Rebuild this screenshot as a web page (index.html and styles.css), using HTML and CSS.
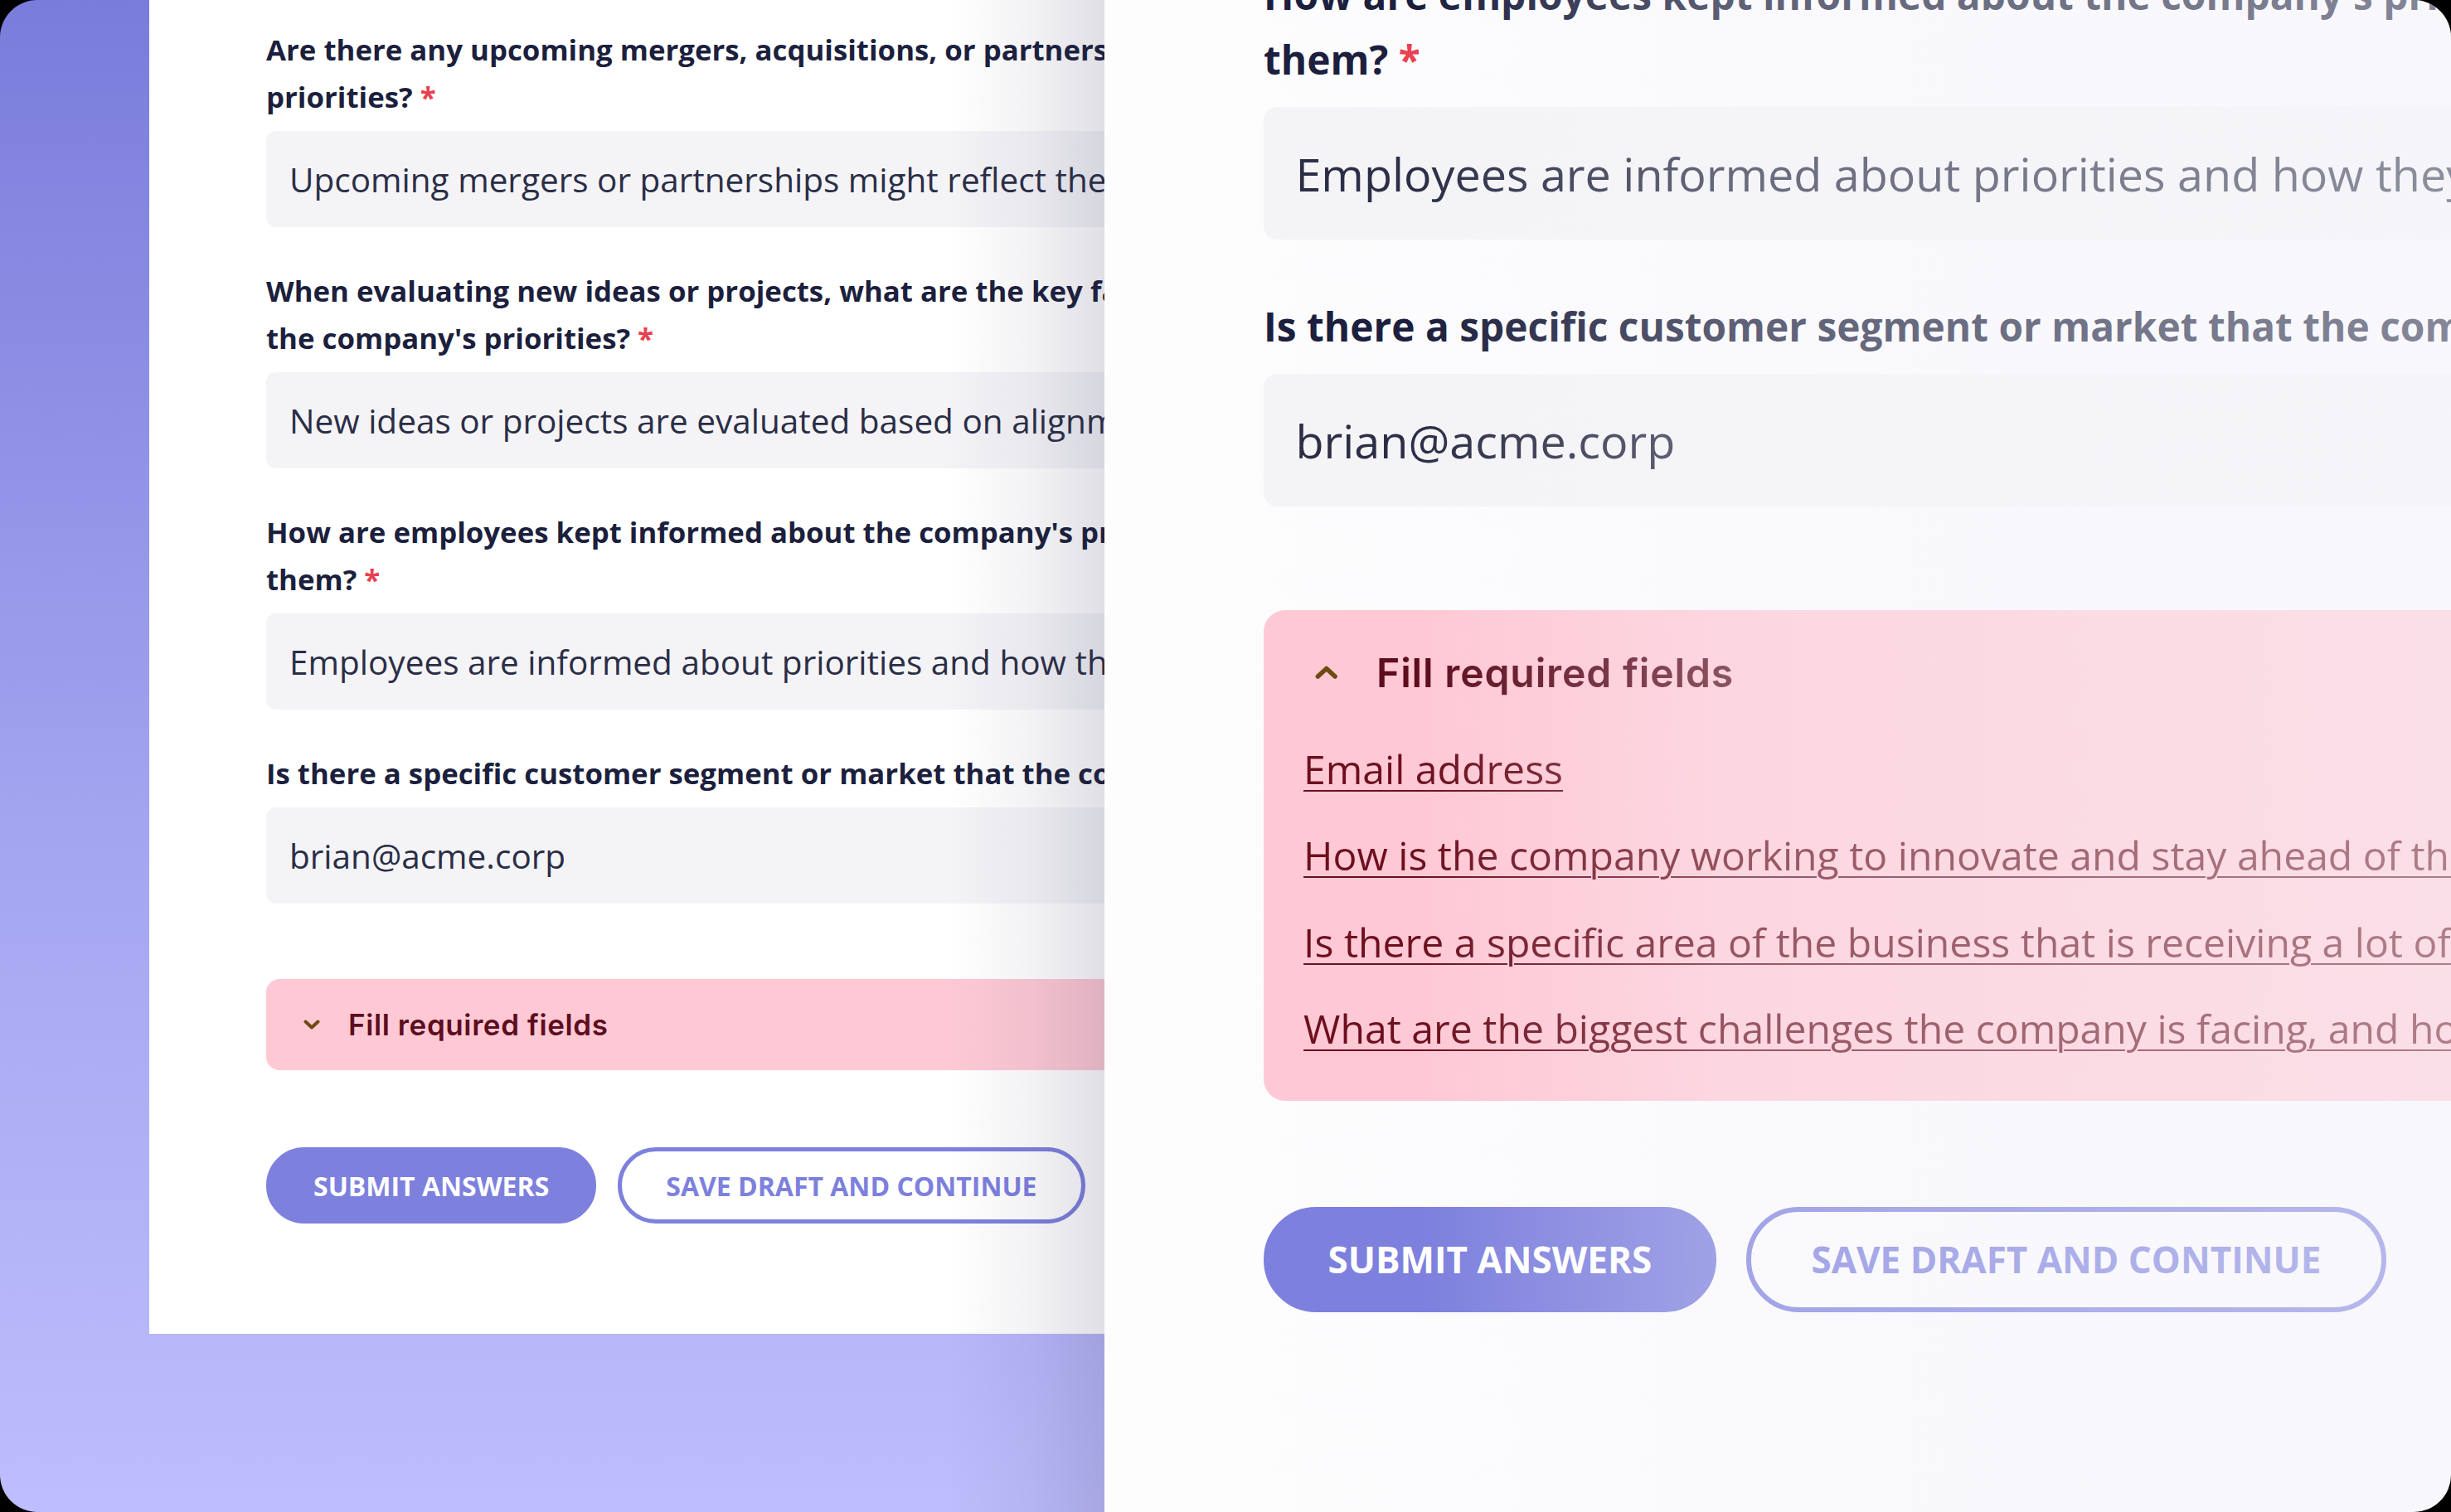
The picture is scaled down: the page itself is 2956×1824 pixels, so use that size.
FILE: index.html
```html
<!DOCTYPE html>
<html lang="en">
<head>
<meta charset="utf-8">
<title>Required fields</title>
<link rel="stylesheet" href="styles.css">
</head>
<body>
<div class="frame">
  <section class="left">
    <div class="card">
      <div class="form">
        <div class="group">
          <div class="label">Are there any upcoming mergers, acquisitions, or partnerships that could impact the company's<br>priorities? <span class="req">*</span></div>
          <div class="input">Upcoming mergers or partnerships might reflect the company's strategic priorities and growth plans.</div>
        </div>
        <div class="group">
          <div class="label">When evaluating new ideas or projects, what are the key factors used to determine their alignment with<br>the company's priorities? <span class="req">*</span></div>
          <div class="input">New ideas or projects are evaluated based on alignment with strategic goals, feasibility, and impact.</div>
        </div>
        <div class="group">
          <div class="label">How are employees kept informed about the company's priorities and how they can contribute to<br>them? <span class="req">*</span></div>
          <div class="input">Employees are informed about priorities and how they can contribute through regular meetings.</div>
        </div>
        <div class="group">
          <div class="label">Is there a specific customer segment or market that the company is focusing on?</div>
          <div class="input">brian@acme.corp</div>
        </div>
        <div class="errors">
          <div class="err-head">
            <svg class="chev" viewBox="0 0 20 12" width="20" height="12"><polyline points="2.5,2.5 10,9.5 17.5,2.5" fill="none" stroke="currentColor" stroke-width="4" stroke-linecap="round" stroke-linejoin="round"/></svg>
            <span class="err-title">Fill required fields</span>
          </div>
        </div>
        <div class="actions">
          <button class="btn primary">Submit answers</button>
          <button class="btn outline">Save draft and continue</button>
        </div>
      </div>
    </div>
  </section>
  <section class="right">
    <div class="form zoomed">
      <div class="group">
        <div class="label">How are employees kept informed about the company's priorities and how they can contribute to<br>them? <span class="req">*</span></div>
        <div class="input">Employees are informed about priorities and how they can contribute through regular meetings.</div>
      </div>
      <div class="group">
        <div class="label">Is there a specific customer segment or market that the company is focusing on?</div>
        <div class="input">brian@acme.corp</div>
      </div>
      <div class="errors open">
        <div class="err-head">
          <svg class="chev" viewBox="0 0 20 12" width="20" height="12"><polyline points="2.5,9.5 10,2.5 17.5,9.5" fill="none" stroke="currentColor" stroke-width="4" stroke-linecap="round" stroke-linejoin="round"/></svg>
          <span class="err-title">Fill required fields</span>
        </div>
        <ul class="err-list">
          <li><a>Email address</a></li>
          <li><a>How is the company working to innovate and stay ahead of the competition?</a></li>
          <li><a>Is there a specific area of the business that is receiving a lot of investment?</a></li>
          <li><a>What are the biggest challenges the company is facing, and how are they being addressed?</a></li>
        </ul>
      </div>
      <div class="actions">
        <button class="btn primary">Submit answers</button>
        <button class="btn outline">Save draft and continue</button>
      </div>
    </div>
    <div class="fade"></div>
  </section>
</div>
</body>
</html>
```
FILE: styles.css
```css
html, body {
  margin: 0;
  padding: 0;
  background: #000;
}

.frame {
  width: 2956px;
  height: 1824px;
  border-radius: 45px;
  overflow: hidden;
  display: flex;
  font-family: "Open Sans", "Noto Sans", sans-serif;
}

/* ---------- left panel ---------- */
.left {
  position: relative;
  width: 1332px;
  flex: none;
  overflow: hidden;
  background: linear-gradient(180deg, #7a7cdb 0%, #a3a5f0 55%, #bebdfd 100%);
  padding-left: 180px;
  box-sizing: border-box;
}

.left::after {
  content: "";
  position: absolute;
  top: 0;
  right: 0;
  bottom: 0;
  width: 190px;
  background: linear-gradient(90deg, rgba(40, 40, 80, 0) 0%, rgba(40, 40, 80, 0.06) 55%, rgba(40, 40, 80, 0.15) 100%);
  pointer-events: none;
}

.card {
  width: 1700px;
  height: 1609px;
  background: #fff;
  box-sizing: border-box;
  padding: 31px 0 0 141px;
}

/* ---------- form ---------- */
.form {
  width: 1400px;
  display: flex;
  flex-direction: column;
}

.group {
  display: flex;
  flex-direction: column;
  gap: 13px;
  margin-bottom: 48px;
}

.label {
  font-size: 34.8px;
  line-height: 57px;
  font-weight: 700;
  color: #1c1f3d;
  white-space: nowrap;
}

.req {
  color: #e8414f;
}

.input {
  height: 116px;
  box-sizing: border-box;
  padding-left: 28px;
  display: flex;
  align-items: center;
  background: #f4f4f7;
  border-radius: 12px;
  font-size: 40.5px;
  color: #2b2e46;
  white-space: nowrap;
  overflow: hidden;
}

.errors {
  margin-top: 43px;
  background: #fec9d5;
  border-radius: 16px;
  color: #5d0d1e;
}

.err-head {
  height: 110px;
  display: flex;
  align-items: center;
  padding-left: 45px;
  gap: 34px;
}

.chev {
  color: #6e4b12;
  display: block;
}

.err-title {
  font-family: "Inter", "Lato", sans-serif;
  font-weight: 600;
  font-size: 35px;
  color: #5d0d1e;
  letter-spacing: 0.6px;
}

.err-list {
  list-style: none;
  margin: -8px 0 0;
  padding: 0 0 25px 35px;
}

.err-list li {
  font-size: 35px;
  line-height: 76px;
  white-space: nowrap;
}

.err-list a {
  color: #6d0f1f;
  text-decoration: underline;
  text-decoration-thickness: 1.5px;
  text-underline-offset: 5px;
}

.actions {
  margin-top: 93px;
  display: flex;
  gap: 26px;
}

.btn {
  height: 92px;
  border-radius: 46px;
  box-sizing: border-box;
  font-family: "Open Sans", sans-serif;
  font-weight: 700;
  font-size: 32px;
  text-transform: uppercase;
  letter-spacing: 0;
  padding: 0 52px;
  border: 5px solid #7d80dd;
}

.btn.primary {
  background: #7d80dd;
  color: #fff;
}

.btn.outline {
  background: transparent;
  color: #7d80dd;
  padding: 0 53px;
}

/* ---------- right panel ---------- */
.right {
  position: relative;
  flex: 1;
  overflow: hidden;
  background: linear-gradient(90deg, #fdfdfe 0%, #fafafd 60%, #f8f8fc 100%);
}

.zoomed {
  zoom: 1.375;
  margin: -33px 0 0 139.6px;
}

.zoomed .errors {
  border-radius: 19px;
}

.fade {
  position: absolute;
  inset: 0;
  pointer-events: none;
  background: linear-gradient(90deg, rgba(247, 247, 252, 0) 0px, rgba(247, 247, 252, 0) 380px, rgba(247, 247, 252, 0.3) 760px, rgba(247, 247, 252, 0.48) 100%);
}
```
